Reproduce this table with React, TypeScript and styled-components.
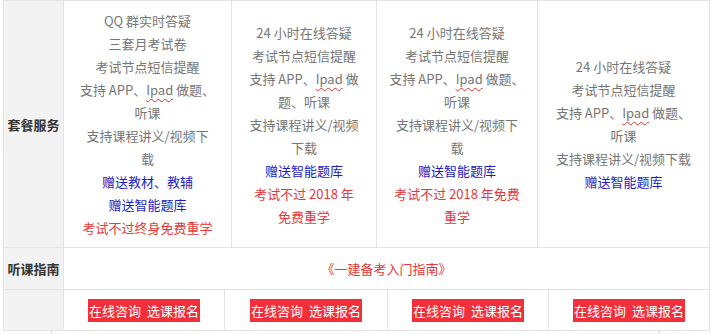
import React from "react";
import styled, { createGlobalStyle } from "styled-components";

const Global = createGlobalStyle`
  html, body { margin: 0; padding: 0; background: #fff; }
  body { font-family: "Noto Sans CJK SC", "Microsoft YaHei", sans-serif; }
`;

const Page = styled.div`
  padding: 0 0 0 3px;
  width: 707px;
`;

const Table = styled.div`
  border-top: 1px solid #e3e3e3;
  border-left: 1px solid #e3e3e3;
  width: 706px;
`;

const Row = styled.div<{ $cols: string; $h: number }>`
  display: grid;
  grid-template-columns: ${(p) => p.$cols};
  height: ${(p) => p.$h}px;
`;

const Cell = styled.div`
  border-right: 1px solid #e3e3e3;
  border-bottom: 1px solid #e3e3e3;
  display: flex;
  flex-direction: column;
  align-items: center;
  justify-content: center;
  text-align: center;
  font-size: 13px;
  line-height: 23px;
  color: #767676;
  white-space: nowrap;
`;

const Label = styled(Cell)`
  background: #f3f3f3;
  color: #333;
  font-weight: bold;
  font-size: 13px;
`;

const Line = styled.div<{ $tone?: "gray" | "blue" | "red" }>`
  color: ${(p) =>
    p.$tone === "blue" ? "#1d1dbf" : p.$tone === "red" ? "#e5393b" : "#767676"};
`;

const Squiggle = styled.span`
  text-decoration: underline wavy #e03030;
  text-decoration-thickness: 1px;
  text-underline-offset: 3px;
`;

const Guide = styled.span`
  color: #e5393b;
`;

const Button = styled.span`
  display: inline-block;
  background: #f2303c;
  color: #fff;
  height: 23px;
  line-height: 23px;
  padding: 0 1px;
  font-size: 13px;
  white-space: pre;
`;

const Tail = styled.div`
  display: grid;
  grid-template-columns: 49px 608px 1fr;
  height: 3px;
`;

const Tick = styled.div`
  border-right: 1px solid #d0d0d0;
`;

type L = { t: React.ReactNode; tone?: "gray" | "blue" | "red" };

const ipad = <Squiggle>Ipad</Squiggle>;

const cols: L[][] = [
  [
    { t: "QQ 群实时答疑" },
    { t: "三套月考试卷" },
    { t: "考试节点短信提醒" },
    { t: <>支持 APP、{ipad} 做题、</> },
    { t: "听课" },
    { t: "支持课程讲义/视频下" },
    { t: "载" },
    { t: "赠送教材、教辅", tone: "blue" },
    { t: "赠送智能题库", tone: "blue" },
    { t: "考试不过终身免费重学", tone: "red" },
  ],
  [
    { t: "24 小时在线答疑" },
    { t: "考试节点短信提醒" },
    { t: <>支持 APP、{ipad} 做</> },
    { t: "题、听课" },
    { t: "支持课程讲义/视频" },
    { t: "下载" },
    { t: "赠送智能题库", tone: "blue" },
    { t: "考试不过 2018 年", tone: "red" },
    { t: "免费重学", tone: "red" },
  ],
  [
    { t: "24 小时在线答疑" },
    { t: "考试节点短信提醒" },
    { t: <>支持 APP、{ipad} 做题、</> },
    { t: "听课" },
    { t: "支持课程讲义/视频下" },
    { t: "载" },
    { t: "赠送智能题库", tone: "blue" },
    { t: "考试不过 2018 年免费", tone: "red" },
    { t: "重学", tone: "red" },
  ],
  [
    { t: "24 小时在线答疑" },
    { t: "考试节点短信提醒" },
    { t: <>支持 APP、{ipad} 做题、</> },
    { t: "听课" },
    { t: "支持课程讲义/视频下载" },
    { t: "赠送智能题库", tone: "blue" },
  ],
];

export default function App() {
  return (
    <Page>
      <Global />
      <Table>
        <Row $cols="60px 168px 145px 161px 172px" $h={247}>
          <Label>套餐服务</Label>
          {cols.map((c, i) => (
            <Cell key={i}>
              {c.map((l, j) => (
                <Line key={j} $tone={l.tone}>
                  {l.t}
                </Line>
              ))}
            </Cell>
          ))}
        </Row>
        <Row $cols="60px 646px" $h={42}>
          <Label>听课指南</Label>
          <Cell>
            <Guide>《一建备考入门指南》</Guide>
          </Cell>
        </Row>
        <Row $cols="60px 161px 163px 161px 161px" $h={41}>
          <Label />
          {[0, 1, 2, 3].map((i) => (
            <Cell key={i}>
              <Button>{"在线咨询  选课报名"}</Button>
            </Cell>
          ))}
        </Row>
      </Table>
      <Tail>
        <Tick />
        <Tick />
        <div />
      </Tail>
    </Page>
  );
}
